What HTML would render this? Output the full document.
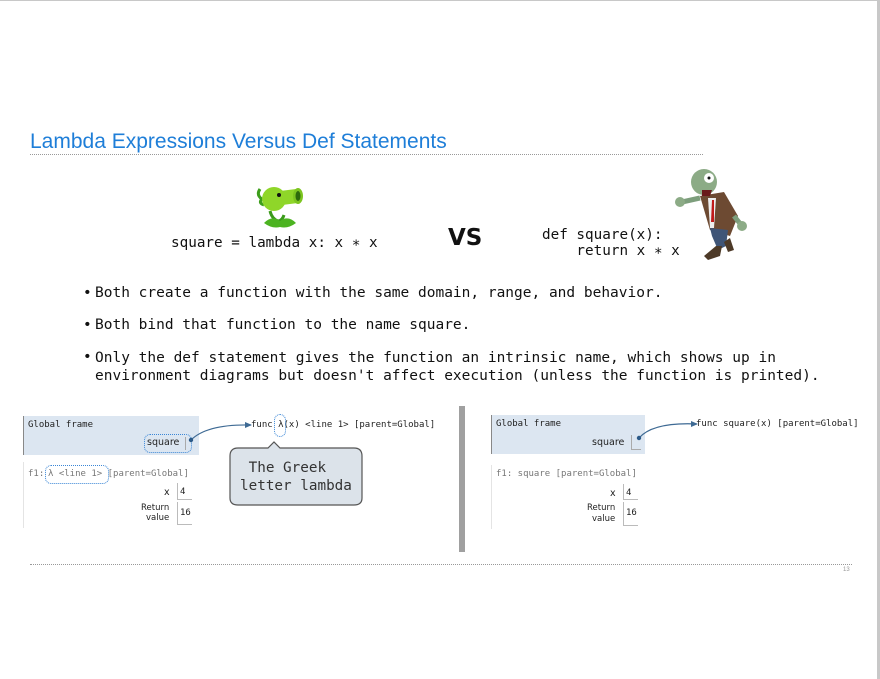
<!DOCTYPE html>
<html><head><meta charset="utf-8"><style>
body{margin:0;width:880px;height:679px;background:#fff;overflow:hidden;position:relative;font-family:"DejaVu Sans Mono","Liberation Mono",monospace}
.a{position:absolute;white-space:pre}
.m{font-family:"DejaVu Sans Mono",monospace;font-size:14.5px;color:#111}
.s{font-family:"DejaVu Sans Mono",monospace;font-size:9px;color:#222}
.g{color:#777}
.ss{font-family:"DejaVu Sans","Liberation Sans",sans-serif;font-size:9.5px;color:#222}
.dot{border:1.3px dotted #3a86d6;border-radius:6px}
</style></head><body>
<div class="a" style="left:0;top:0;width:880px;height:1px;background:#c8c8c8"></div>
<div class="a" style="left:877px;top:0;width:3px;height:679px;background:#c8c8c8"></div>

<div class="a" style="left:30px;top:130px;font-family:'Liberation Sans',sans-serif;font-size:21px;color:#1e7ed8">Lambda Expressions Versus Def Statements</div>
<div class="a" style="left:30px;top:154px;width:673px;border-top:1px dotted #999"></div>

<svg class="a" style="left:254px;top:181px" width="52" height="50" viewBox="0 0 52 50">
<path d="M16 30 Q18 38 24 40 Q28 40 30 34" stroke="#3a9a1a" stroke-width="3" fill="none"/>
<path d="M10 42 Q18 34 26 40 Q34 34 42 42 Q34 48 26 46 Q18 48 10 42Z" fill="#4cb321"/>
<path d="M6 8 Q2 14 8 18 Q4 22 10 24" stroke="#3d9e1b" stroke-width="3" fill="none"/>
<circle cx="20" cy="18" r="12" fill="#8fd629"/>
<path d="M26 10 L42 8 L44 22 L28 24Z" fill="#8fd629"/>
<ellipse cx="44" cy="15" rx="5" ry="8" fill="#7cc520"/>
<ellipse cx="44" cy="15" rx="2.5" ry="5" fill="#2d6a0c"/>
<circle cx="25" cy="14" r="2" fill="#111"/>
</svg>
<div class="a m" style="left:171px;top:235px;font-size:14.3px">square = lambda x: x ∗ x</div>
<div class="a" style="left:448px;top:225px;font-family:'DejaVu Sans',sans-serif;font-weight:bold;font-size:23px;color:#111">VS</div>
<div class="a m" style="left:542px;top:227px;font-size:14.3px">def square(x):
    return x ∗ x</div>
<svg class="a" style="left:672px;top:166px" width="80" height="98" viewBox="0 0 80 98">
<path d="M28 30 L52 26 L66 50 L58 70 L38 64Z" fill="#6d4a32"/>
<path d="M36 32 L44 32 L42 62 L38 62Z" fill="#eee"/>
<path d="M40 34 L42 34 L42 56 L39 56Z" fill="#c01a1a"/>
<path d="M38 62 L56 64 L54 80 L46 84 L40 70Z" fill="#3f5577"/>
<path d="M44 80 L50 80 L48 90 L36 94 L32 90Z" fill="#4d3a28"/>
<path d="M52 76 L58 72 L62 84 L56 86Z" fill="#4d3a28"/>
<circle cx="32" cy="16" r="13" fill="#8cab86"/>
<circle cx="37" cy="12" r="5" fill="#fff"/><circle cx="37" cy="12" r="1.5" fill="#111"/>
<path d="M30 24 L40 24 L38 30 L30 30Z" fill="#6a1a1a"/>
<path d="M28 32 L10 36" stroke="#7d9e7c" stroke-width="5"/>
<circle cx="8" cy="36" r="5" fill="#8cab86"/>
<path d="M62 50 L70 60" stroke="#7d9e7c" stroke-width="5"/>
<circle cx="70" cy="60" r="5" fill="#8cab86"/>
</svg>

<div class="a m" style="left:83px;top:285px">•</div>
<div class="a m" style="left:95px;top:285px">Both create a function with the same domain, range, and behavior.</div>
<div class="a m" style="left:83px;top:317px">•</div>
<div class="a m" style="left:95px;top:317px">Both bind that function to the name square.</div>
<div class="a m" style="left:83px;top:349px">•</div>
<div class="a m" style="left:95px;top:349px;line-height:18px">Only the def statement gives the function an intrinsic name, which shows up in
environment diagrams but doesn't affect execution (unless the function is printed).</div>

<div class="a" style="left:23px;top:416px;width:175px;height:39px;background:#dce6f1;border-left:1px solid #888"></div>
<div class="a s" style="left:28px;top:420px">Global frame</div>
<div class="a dot" style="left:144px;top:434px;width:46px;height:17px"></div>
<div class="a ss" style="left:147px;top:437px">square</div>
<div class="a" style="left:185px;top:437px;width:1px;height:13px;background:#aaa"></div>
<div class="a" style="left:23px;top:462px;width:1px;height:66px;background:#e4e4e4"></div>
<div class="a s g" style="left:28px;top:469px">f1:</div>
<div class="a dot" style="left:45px;top:465px;width:62px;height:17px"></div>
<div class="a s g" style="left:48px;top:469px">λ &lt;line 1&gt; [parent=Global]</div>
<div class="a ss g" style="left:164px;top:487px">x</div>
<div class="a" style="left:177px;top:483px;width:14px;height:16px;border-left:1px solid #bbb;border-bottom:1px solid #bbb"></div>
<div class="a s" style="left:180px;top:487px">4</div>
<div class="a ss g" style="left:141px;top:503px;text-align:right;font-size:8.5px;line-height:10px">Return
 value</div>
<div class="a" style="left:177px;top:502px;width:14px;height:22px;border-left:1px solid #bbb;border-bottom:1px solid #bbb"></div>
<div class="a s" style="left:180px;top:508px">16</div>
<div class="a s" style="left:251px;top:420px">func λ(x) &lt;line 1&gt; [parent=Global]</div>
<div class="a dot" style="left:274px;top:414px;width:10px;height:21px;border-radius:6px"></div>
<svg class="a" style="left:185px;top:418px" width="70" height="30"><path d="M6 22 Q22 6 66 7" stroke="#3e6a94" stroke-width="1.2" fill="none"/><circle cx="6" cy="22" r="2.2" fill="#2c5a88"/><path d="M60 4 L67 7 L60 10Z" fill="#3e6a94"/></svg>
<svg class="a" style="left:228px;top:440px" width="136" height="67"><path d="M10 8 H40 L46 2 L52 8 H126 Q134 8 134 16 V58 Q134 65 126 65 H10 Q2 65 2 58 V16 Q2 8 10 8Z" fill="#dce3ea" stroke="#555" stroke-width="1.2"/></svg>
<div class="a" style="left:240px;top:459px;font-size:14.3px;color:#333;line-height:18px"> The Greek
letter lambda</div>

<div class="a" style="left:459px;top:406px;width:6px;height:146px;background:#a0a0a0"></div>

<div class="a" style="left:491px;top:415px;width:153px;height:39px;background:#dce6f1;border-left:1px solid #888"></div>
<div class="a s" style="left:496px;top:419px">Global frame</div>
<div class="a ss" style="left:592px;top:437px">square</div>
<div class="a" style="left:631px;top:435px;width:9px;height:14px;border-left:1px solid #aaa;border-bottom:1px solid #aaa"></div>
<div class="a" style="left:491px;top:465px;width:1px;height:64px;background:#e4e4e4"></div>
<div class="a s g" style="left:496px;top:469px">f1: square [parent=Global]</div>
<div class="a ss g" style="left:610px;top:488px">x</div>
<div class="a" style="left:623px;top:484px;width:14px;height:15px;border-left:1px solid #bbb;border-bottom:1px solid #bbb"></div>
<div class="a s" style="left:626px;top:488px">4</div>
<div class="a ss g" style="left:587px;top:503px;text-align:right;font-size:8.5px;line-height:11px">Return
 value</div>
<div class="a" style="left:623px;top:502px;width:14px;height:23px;border-left:1px solid #bbb;border-bottom:1px solid #bbb"></div>
<div class="a s" style="left:626px;top:508px">16</div>
<div class="a s" style="left:696px;top:419px">func square(x) [parent=Global]</div>
<svg class="a" style="left:635px;top:418px" width="64" height="30"><path d="M4 20 Q18 4 62 6" stroke="#3e6a94" stroke-width="1.2" fill="none"/><circle cx="4" cy="20" r="2.2" fill="#2c5a88"/><path d="M56 3 L63 6 L56 9Z" fill="#3e6a94"/></svg>

<div class="a" style="left:30px;top:564px;width:822px;border-top:1px dotted #999"></div>
<div class="a" style="left:843px;top:567px;font-family:'Liberation Sans',sans-serif;font-size:6px;color:#999">13</div>
</body></html>
